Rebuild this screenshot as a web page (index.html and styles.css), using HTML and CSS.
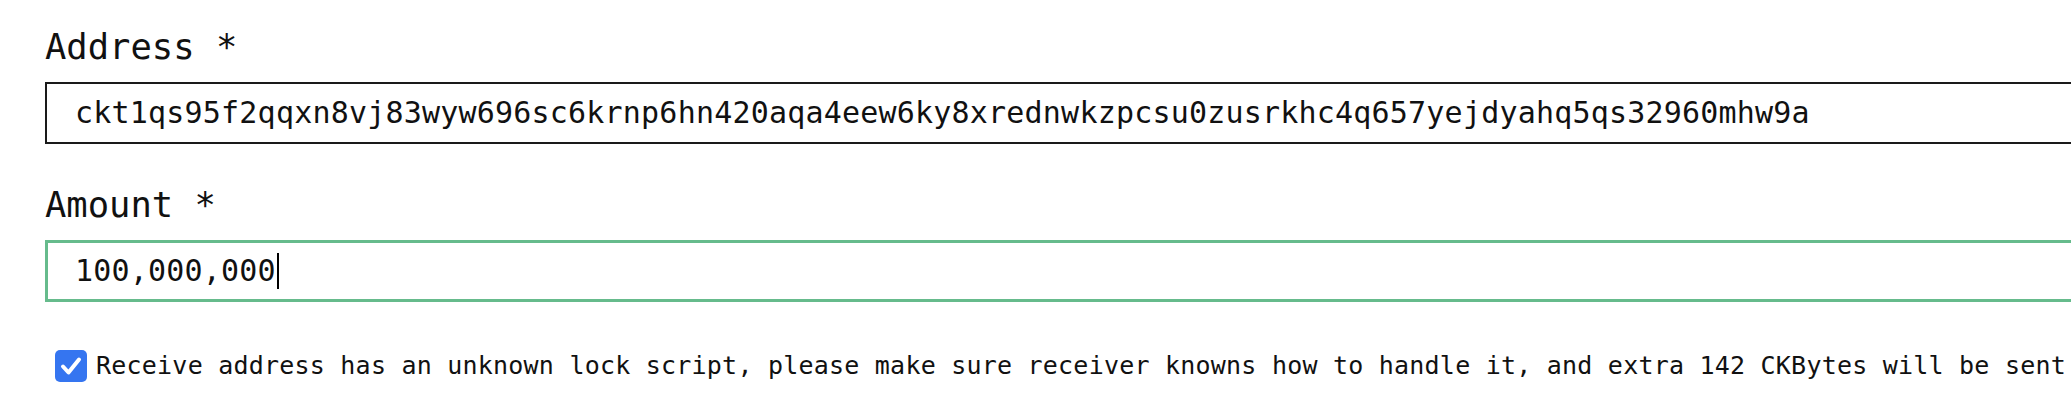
FILE: index.html
```html
<!DOCTYPE html>
<html>
<head>
<meta charset="utf-8">
<link rel="stylesheet" href="styles.css">
</head>
<body>
<div class="form">
  <div class="field">
    <div class="label">Address *</div>
    <div class="input">ckt1qs95f2qqxn8vj83wyw696sc6krnp6hn420aqa4eew6ky8xrednwkzpcsu0zusrkhc4q657yejdyahq5qs32960mhw9a</div>
  </div>
  <div class="field">
    <div class="label">Amount *</div>
    <div class="input input-focus">100,000,000<span class="caret"></span></div>
  </div>
  <label class="check-row">
    <span class="checkbox"><svg viewBox="0 0 32 32" width="32" height="32"><path d="M8 16.5 L13.5 22.5 L24 9.5" fill="none" stroke="#fff" stroke-width="4" stroke-linecap="round" stroke-linejoin="round"/></svg></span>
    <span class="check-text">Receive address has an unknown lock script, please make sure receiver knowns how to handle it, and extra 142 CKBytes will be sent</span>
  </label>
</div>
</body>
</html>
```
FILE: styles.css
```css
html, body {
  margin: 0;
  padding: 0;
  background: #fff;
  overflow: hidden;
}
.form {
  padding: 27px 0 0 45px;
  font-family: "DejaVu Sans Mono", monospace;
  color: #111;
  width: 2200px;
}
.field {
  margin-bottom: 41px;
}
.label {
  font-size: 35.5px;
  line-height: 40px;
  height: 40px;
  margin-bottom: 15px;
  white-space: nowrap;
}
.input {
  box-sizing: border-box;
  height: 62px;
  width: 2100px;
  border: 2px solid #1a1a1a;
  padding-left: 28px;
  display: flex;
  align-items: center;
  font-size: 30px;
  line-height: 30px;
  letter-spacing: 0.2px;
  white-space: nowrap;
}
.input-focus {
  border: 3px solid #66bb8c;
  padding-left: 27px;
}
.caret {
  display: inline-block;
  width: 2px;
  height: 36px;
  background: #000;
  margin-left: 1px;
}
.check-row {
  display: flex;
  align-items: center;
  margin-top: 48px;
  padding-left: 10px;
  height: 32px;
}
.checkbox {
  width: 32px;
  height: 32px;
  border-radius: 5px;
  background: #3575f0;
  display: flex;
  flex: none;
}
.check-text {
  margin-left: 9px;
  font-size: 25px;
  line-height: 32px;
  letter-spacing: 0.22px;
  white-space: nowrap;
}
```
